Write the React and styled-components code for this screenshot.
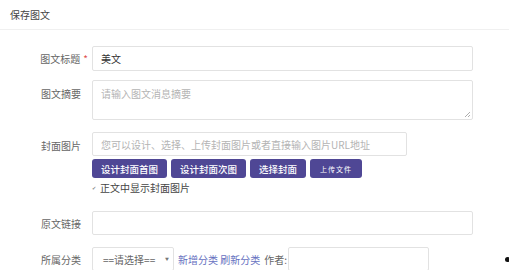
import React from 'react';
import styled, { createGlobalStyle } from 'styled-components';

const GlobalStyle = createGlobalStyle`
  html, body {
    margin: 0;
    padding: 0;
    background: #fff;
  }
  body {
    font-family: "Noto Sans CJK SC", "Noto Sans", sans-serif;
    font-size: 10px;
    color: #333;
  }
`;

const Page = styled.div`
  position: relative;
  width: 509px;
  height: 270px;
  overflow: hidden;
`;

const Header = styled.div`
  height: 29px;
  padding-left: 10px;
  display: flex;
  align-items: center;
  border-bottom: 1px solid #f0f0f0;
  font-size: 10px;
  color: #444;
`;

const Form = styled.div`
  padding-top: 16px;
`;

const Row = styled.div`
  display: grid;
  grid-template-columns: 81px 1fr;
  column-gap: 11px;
  align-items: ${props => (props.$top ? 'start' : 'center')};
  margin-bottom: ${props => props.$gap || 0}px;
`;

const Label = styled.div`
  text-align: right;
  font-size: 10px;
  color: #666;
  white-space: nowrap;
  padding-top: ${props => props.$pad || 0}px;
`;

const Star = styled.span`
  color: #e05050;
  margin-left: 3px;
  margin-right: -7px;
`;

const Field = styled.div`
  display: flex;
  flex-direction: column;
  align-items: flex-start;
`;

const Input = styled.div`
  box-sizing: border-box;
  width: ${props => props.$w || 381}px;
  height: ${props => props.$h || 25}px;
  border: 1px solid #e2e2e2;
  border-radius: 2px;
  padding: 0 8px;
  display: flex;
  align-items: center;
  font-size: 10px;
  white-space: nowrap;
  color: ${props => (props.$ph ? '#b4b4b4' : '#333')};
  background: #fff;
`;

const TextArea = styled.div`
  position: relative;
  box-sizing: border-box;
  width: 381px;
  height: 40px;
  border: 1px solid #e2e2e2;
  border-radius: 2px;
  padding: 5px 8px;
  font-size: 10px;
  color: #b4b4b4;
`;

const Grip = styled.svg`
  position: absolute;
  right: 1px;
  bottom: 1px;
`;

const ButtonBar = styled.div`
  display: flex;
  gap: 4px;
  margin-top: 3px;
`;

const Button = styled.div`
  height: 19px;
  padding: 0 ${props => (props.$small ? 10 : 9)}px;
  display: flex;
  align-items: center;
  background: #4f4795;
  border-radius: 3px;
  color: #fff;
  font-size: ${props => (props.$small ? 7 : 9.5)}px;
  font-weight: ${props => (props.$small ? 400 : 500)};
  letter-spacing: ${props => (props.$small ? 1 : 0)}px;
`;

const CheckLine = styled.div`
  display: flex;
  align-items: center;
  gap: 3px;
  height: 14px;
  margin-top: 2px;
  font-size: 10px;
  color: #444;
`;

const Tick = styled.span`
  font-size: 5px;
  color: #888;
  width: 5px;
`;

const Inline = styled.div`
  display: flex;
  align-items: center;
  gap: 4px;
`;

const SelectBox = styled.div`
  box-sizing: border-box;
  width: 82px;
  height: 24px;
  border: 1px solid #e2e2e2;
  border-radius: 2px;
  display: flex;
  align-items: center;
  justify-content: space-between;
  padding: 0 4px 0 10px;
  font-size: 10px;
  color: #666;
`;

const Arrow = styled.span`
  font-size: 4px;
  color: #777;
`;

const Links = styled.span`
  color: #6670c0;
  font-size: 10px;
`;

const Author = styled.span`
  color: #666;
  font-size: 10px;
  margin-right: -3px;
`;

const Dot = styled.div`
  position: absolute;
  left: 505px;
  top: 257px;
  width: 5px;
  height: 5px;
  border-radius: 50%;
  background: #111;
`;

export default function App() {
  return (
    <Page>
      <GlobalStyle />
      <Header>保存图文</Header>
      <Form>
        <Row $gap={9}>
          <Label>
            图文标题<Star>*</Star>
          </Label>
          <Input>美文</Input>
        </Row>
        <Row $gap={12} $top>
          <Label $pad={6}>图文摘要</Label>
          <TextArea>
            请输入图文消息摘要
            <Grip width="7" height="7" viewBox="0 0 7 7">
              <path d="M6 1 L1 6 M6 4 L4 6" stroke="#999" strokeWidth="0.8" />
            </Grip>
          </TextArea>
        </Row>
        <Row $gap={17} $top>
          <Label $pad={6}>封面图片</Label>
          <Field>
            <Input $w={315} $h={24} $ph>您可以设计、选择、上传封面图片或者直接输入图片URL地址</Input>
            <ButtonBar>
              <Button>设计封面首图</Button>
              <Button>设计封面次图</Button>
              <Button>选择封面</Button>
              <Button $small>上传文件</Button>
            </ButtonBar>
            <CheckLine>
              <Tick>✔</Tick>
              正文中显示封面图片
            </CheckLine>
          </Field>
        </Row>
        <Row $gap={12}>
          <Label>原文链接</Label>
          <Input $h={24} />
        </Row>
        <Row>
          <Label>所属分类</Label>
          <Inline>
            <SelectBox>
              ==请选择==
              <Arrow>▼</Arrow>
            </SelectBox>
            <Links>新增分类 刷新分类</Links>
            <Author>作者:</Author>
            <Input $w={141} $h={24} />
          </Inline>
        </Row>
      </Form>
      <Dot />
    </Page>
  );
}
